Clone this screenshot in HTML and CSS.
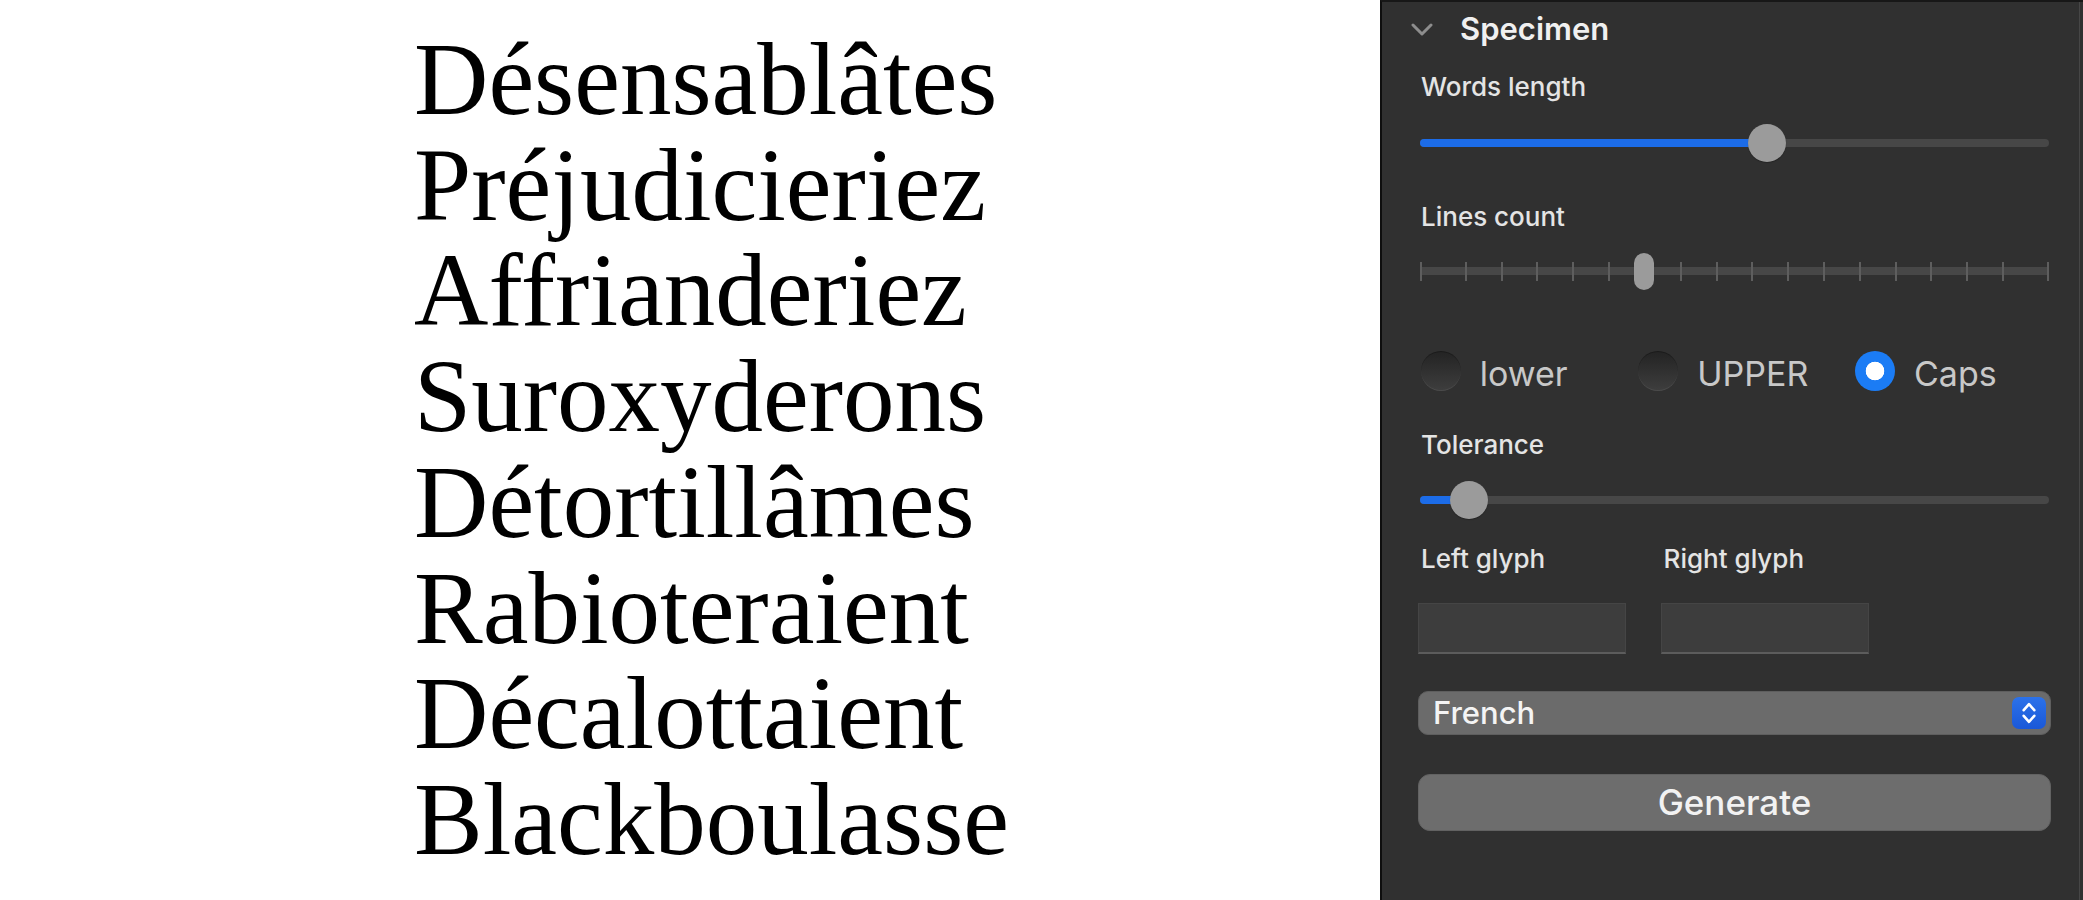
FILE: index.html
```html
<!DOCTYPE html>
<html lang="fr">
<head>
<meta charset="utf-8">
<title>Specimen</title>
<link rel="stylesheet" href="styles.css">
</head>
<body>
<main class="canvas">
  <div class="words">
    <div>Désensablâtes</div>
    <div>Préjudicieriez</div>
    <div>Affrianderiez</div>
    <div>Suroxyderons</div>
    <div>Détortillâmes</div>
    <div>Rabioteraient</div>
    <div>Décalottaient</div>
    <div>Blackboulasse</div>
  </div>
</main>
<aside class="panel">
  <div class="panel-head">
    <svg class="chev" width="22" height="13" viewBox="0 0 22 13"><path d="M2 2 L11 11 L20 2" fill="none" stroke="#8d8d8d" stroke-width="3" stroke-linecap="round" stroke-linejoin="round"/></svg>
    <span class="title">Specimen</span>
  </div>

  <div class="lbl lbl-words">Words length</div>
  <div class="slider s-words">
    <div class="track"><div class="fill" style="width:55.2%"></div></div>
    <div class="knob" style="left:55.2%"></div>
  </div>

  <div class="lbl lbl-lines">Lines count</div>
  <div class="tslider">
    <div class="ticks">
      <i class="tick first"></i><i class="tick"></i><i class="tick"></i><i class="tick"></i><i class="tick"></i><i class="tick"></i><i class="tick"></i><i class="tick"></i><i class="tick"></i><i class="tick"></i><i class="tick"></i><i class="tick"></i><i class="tick"></i><i class="tick"></i><i class="tick"></i><i class="tick"></i><i class="tick"></i><i class="tick last"></i>
    </div>
    <div class="pill"></div>
  </div>

  <div class="radios">
    <div class="radio"><span class="dot"></span><span class="rlabel">lower</span></div>
    <div class="radio"><span class="dot"></span><span class="rlabel">UPPER</span></div>
    <div class="radio"><span class="dot on"></span><span class="rlabel">Caps</span></div>
  </div>

  <div class="lbl lbl-tol">Tolerance</div>
  <div class="slider s-tol">
    <div class="track"><div class="fill" style="width:7.75%"></div></div>
    <div class="knob" style="left:7.75%"></div>
  </div>

  <div class="glyphs">
    <div class="lbl">Left glyph</div>
    <div class="lbl">Right glyph</div>
    <div class="field"></div>
    <div class="field"></div>
  </div>

  <div class="popup">
    <span class="popup-text">French</span>
    <span class="stepper"><svg width="34" height="32" viewBox="0 0 34 32"><path d="M11.7 13.2 L17 7.2 L22.3 13.2 M11.7 18.8 L17 24.8 L22.3 18.8" fill="none" stroke="#fff" stroke-width="2.6" stroke-linecap="round" stroke-linejoin="round"/></svg></span>
  </div>

  <div class="button">Generate</div>
</aside>
</body>
</html>
```

FILE: styles.css
```css
html, body {
  margin: 0;
  padding: 0;
}
body {
  width: 2083px;
  height: 900px;
  overflow: hidden;
  display: flex;
  background: #ffffff;
}

/* ---------- specimen words ---------- */
.canvas {
  width: 1380px;
  flex: none;
  box-sizing: border-box;
  padding: 27px 0 0 414px;
  overflow: hidden;
}
.words {
  font-family: "Liberation Serif", "Times New Roman", serif;
  font-size: 103px;
  line-height: 105.7px;
  color: #000;
  white-space: nowrap;
}

/* ---------- side panel ---------- */
.panel {
  width: 703px;
  flex: none;
  box-sizing: border-box;
  height: 900px;
  background: #303030;
  border-left: 2px solid #0e0e0e;
  border-top: 2px solid #171717;
  padding: 0 32px 0 36px;
  box-shadow: inset -3px 0 0 #303030, inset -4px 0 0 #464646;
  font-family: Inter, "Noto Sans", sans-serif;
  color: #e6e6e6;
}

.panel-head {
  display: flex;
  align-items: center;
  height: 32px;
  margin-left: -7px;
  padding-top: 11px;
  gap: 27px;
}
.chev { flex: none; }
.title {
  font-size: 31px;
  font-weight: 600;
  line-height: 32px;
  color: #f0f0f0;
}

.lbl {
  font-size: 26px;
  font-weight: 500;
  line-height: 30px;
  padding-left: 3px;
  color: #e4e4e4;
  white-space: nowrap;
}
.lbl-words { margin-top: 27px; }
.lbl-lines { margin-top: 40px; }
.lbl-tol { margin-top: 38.5px; }

/* continuous sliders */
.slider {
  position: relative;
  height: 38px;
  margin: 0 2px;
  display: flex;
  align-items: center;
}
.s-words { margin-top: 21.5px; }
.s-tol { margin-top: 21px; }
.track {
  flex: 1;
  height: 8px;
  border-radius: 4px;
  background: #474747;
  overflow: hidden;
}
.fill {
  height: 100%;
  background: #1c6ce8;
}
.knob {
  position: absolute;
  top: 0;
  width: 38px;
  height: 38px;
  border-radius: 50%;
  background: #9b9b9b;
  transform: translateX(-50%);
  box-shadow: 0 1px 1px rgba(0,0,0,.25);
}

/* tick slider */
.tslider {
  position: relative;
  height: 37px;
  margin: 21.2px 2px 0;
}
.ticks {
  height: 100%;
  display: flex;
  align-items: center;
  justify-content: space-between;
  background: linear-gradient(#474747, #474747) center / 100% 8px no-repeat;
}
.tick {
  display: block;
  width: 2px;
  height: 19px;
  background: #5e5e5e;
}
.tick.first { margin-right: 9px; }
.tick.last { margin-left: 9px; }
.pill {
  position: absolute;
  top: 0;
  left: 214px;
  width: 20px;
  height: 37px;
  border-radius: 10px;
  background: #9b9b9b;
}

/* radios */
.radios {
  display: grid;
  grid-template-columns: 217.6px 216.7px auto;
  margin-top: 61.8px;
  padding-left: 2.7px;
  height: 40px;
}
.radio {
  display: flex;
  align-items: flex-start;
  gap: 19px;
}
.dot {
  flex: none;
  width: 40px;
  height: 40px;
  border-radius: 50%;
  background: linear-gradient(#232323, #3e3e3e);
  box-shadow: inset 0 -1px 0 rgba(255,255,255,.07), inset 0 1px 0 rgba(0,0,0,.25);
  box-sizing: border-box;
}
.dot.on {
  background: radial-gradient(circle, #ffffff 0 9px, #1b7cf5 9.6px);
  box-shadow: none;
}
.rlabel {
  font-size: 34px;
  font-weight: 400;
  line-height: 40px;
  margin-top: 3px;
  color: #c8c8c8;
}

/* glyph fields */
.glyphs {
  display: grid;
  grid-template-columns: 208px 208px;
  column-gap: 34.6px;
  row-gap: 29px;
  margin-top: 25px;
}
.field {
  height: 51px;
  box-sizing: border-box;
  background: #3d3d3d;
  border: 1px solid #454545;
  border-bottom: 2px solid #5c5c5c;
}

/* popup */
.popup {
  margin-top: 37px;
  height: 44px;
  box-sizing: border-box;
  border-radius: 10px;
  background: #6b6b6b;
  border: 1px solid #5e5e5e;
  display: flex;
  align-items: center;
  justify-content: space-between;
  padding: 0 4px 0 14px;
}
.popup-text {
  font-size: 31px;
  font-weight: 500;
  line-height: 42px;
  color: #f4f4f4;
}
.stepper {
  width: 34px;
  height: 32px;
  border-radius: 7px;
  background: linear-gradient(#2c72ea, #1a58d8);
  display: block;
}
.stepper svg { display: block; }

/* button */
.button {
  margin-top: 39px;
  height: 57px;
  box-sizing: border-box;
  border-radius: 12px;
  background: #6d6d6d;
  border: 1px solid #626262;
  text-align: center;
  font-size: 35px;
  font-weight: 500;
  line-height: 55px;
  color: #f2f2f2;
}
```
